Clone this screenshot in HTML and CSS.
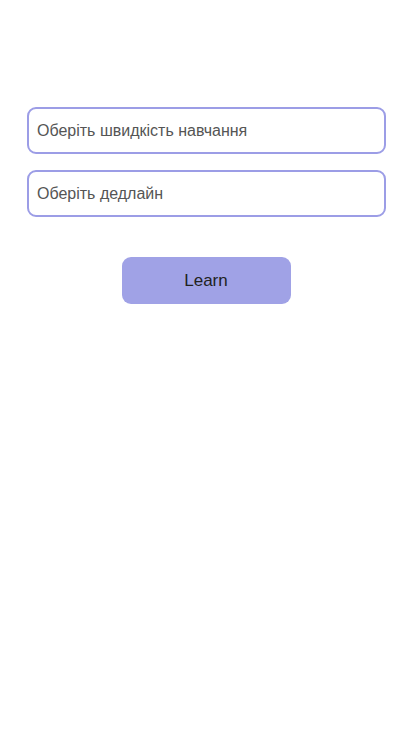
FILE: index.html
```html
<!DOCTYPE html>
<html lang="uk">
<head>
<meta charset="utf-8">
<link rel="stylesheet" href="styles.css">
</head>
<body>
<main class="form">
  <div class="field">Оберіть швидкість навчання</div>
  <div class="field">Оберіть дедлайн</div>
  <div class="actions"><button class="btn">Learn</button></div>
</main>
</body>
</html>
```
FILE: styles.css
```css
html, body { margin: 0; padding: 0; background: #fff; }
body { font-family: "Liberation Sans", Arial, sans-serif; }
.form {
  display: flex;
  flex-direction: column;
  padding: 107px 28px 0 27px;
  gap: 16px;
}
.field {
  box-sizing: border-box;
  height: 47px;
  border: 2px solid #9c9de6;
  border-radius: 9px;
  padding: 0 8px;
  display: flex;
  align-items: center;
  font-size: 16px;
  color: #555;
}
.actions {
  display: flex;
  justify-content: center;
  margin-top: 24px;
  padding-right: 1px;
}
.btn {
  width: 169px;
  height: 47px;
  border: none;
  border-radius: 9px;
  background: #a0a2e6;
  color: #222;
  font-family: "Liberation Sans", Arial, sans-serif;
  font-size: 17px;
}
```
